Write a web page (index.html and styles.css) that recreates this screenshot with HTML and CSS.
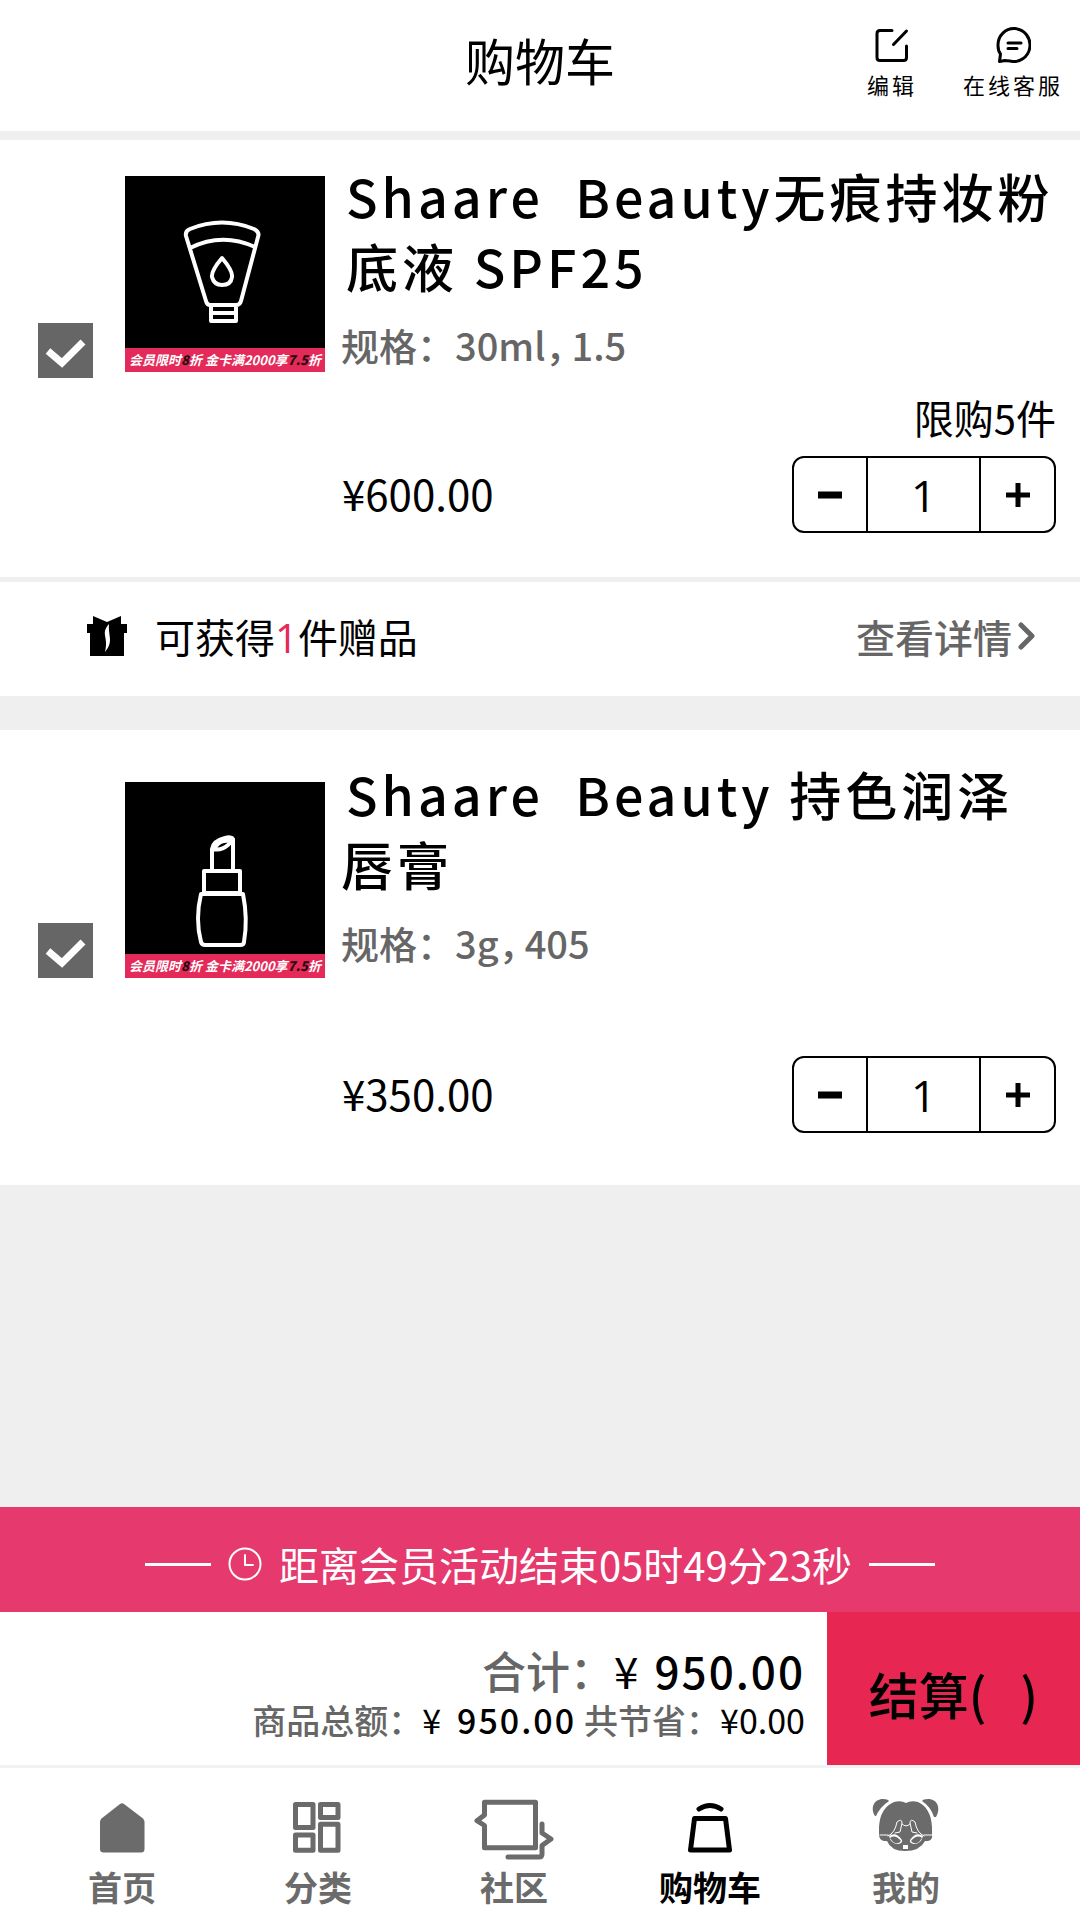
FILE: index.html
```html
<!DOCTYPE html>
<html lang="zh-CN">
<head>
<meta charset="utf-8">
<meta name="viewport" content="width=device-width, initial-scale=1">
<title>购物车</title>
<link rel="stylesheet" href="styles.css">
</head>
<body>
<header class="header">
  <h1 class="header-title">购物车</h1>
  <div class="header-actions">
    <button class="action" type="button">
      <svg class="action-icon" viewBox="0 0 36 36" aria-hidden="true"><path d="M18 3.500H6Q3 3.500 3 6.500V30.500Q3 33.500 6 33.500H29.500Q32.500 33.500 32.500 30.500V19M32.500 4L19.500 17.500"/></svg>
      <span>编辑</span>
    </button>
    <button class="action" type="button">
      <svg class="action-icon" viewBox="0 0 36 36" aria-hidden="true"><path d="M4.500 34.500L5.500 27C3 24 3 21 3 18.500A16 16.500 0 1 1 15 34Q11 33.500 10 33.500ZM13 16H26M13 21.500H22"/></svg>
      <span>在线客服</span>
    </button>
  </div>
</header>

<main class="cart">
  <article class="item">
    <label class="check" aria-label="选择粉底液">
      <input class="check-input" type="checkbox" checked>
      <svg class="check-mark" viewBox="0 0 55 55" aria-hidden="true"><path d="M10 28L24 40L45 19"/></svg>
    </label>
    <div class="photo">
      <svg class="photo-art" viewBox="0 0 200 172" aria-hidden="true">
        <path d="M61 60Q60 55 65 53Q97 40 129 53Q135 56 133 61L116 125Q115 129 111 129H85Q82 129 81 125ZM65 72Q97 56 130 71M86 129V145H111V129M86 137H111M97 82Q86 95 87 101Q89 109 97 109Q106 109 107 101Q108 95 97 82Z"/>
      </svg>
      <p class="promo">会员限时<b>8</b>折 金卡满2000享<b>7.5</b>折</p>
    </div>
    <div class="info">
      <h2 class="name">Shaare&nbsp; Beauty无痕持妆粉底液 SPF25</h2>
      <p class="spec">规格：30ml<span class="half">，</span>1.5</p>
    </div>
    <div class="purchase">
      <p class="limit">限购5件</p>
      <p class="price">¥600.00</p>
      <div class="stepper">
        <button class="step" type="button" aria-label="减少"><svg class="step-icon" viewBox="0 0 24 24" aria-hidden="true"><path class="minus" d="M0 12H24"/></svg></button>
        <input class="qty" type="text" inputmode="numeric" value="1" aria-label="数量">
        <button class="step" type="button" aria-label="增加"><svg class="step-icon" viewBox="0 0 24 24" aria-hidden="true"><path d="M0 12H24M12 0V24"/></svg></button>
      </div>
    </div>
  </article>

  <section class="gift">
    <svg class="gift-icon" viewBox="0 0 40 40" aria-hidden="true"><path d="M6 0L20 6L34 0V8H40V17H37V40H3V17H0V8H6Z"/><path class="ribbon" d="M22 8C13 18 22 20 18 36C27 25 21 21 22 8Z"/></svg>
    <p class="gift-text">可获得<span class="gift-count">1</span>件赠品</p>
    <a class="gift-link" href="#gift">查看详情<svg class="chevron" viewBox="0 0 18 28" aria-hidden="true"><path d="M3 3L14 14L3 25"/></svg></a>
  </section>

  <article class="item item-low">
    <label class="check" aria-label="选择唇膏">
      <input class="check-input" type="checkbox" checked>
      <svg class="check-mark" viewBox="0 0 55 55" aria-hidden="true"><path d="M10 28L24 40L45 19"/></svg>
    </label>
    <div class="photo">
      <svg class="photo-art" viewBox="0 0 200 172" aria-hidden="true">
        <path d="M87 89V67Q88 59 100 56Q106 54 108 57V89M88 67Q96 69 103 63Q108 59 107 56M91 64Q96 58 104 59M79 89H115V111H79ZM76 112H118Q123 137 119 160Q119 163 115 163H80Q77 163 76 160Q70 137 76 112Z"/>
      </svg>
      <p class="promo">会员限时<b>8</b>折 金卡满2000享<b>7.5</b>折</p>
    </div>
    <div class="info">
      <h2 class="name">Shaare&nbsp; Beauty 持色润泽唇膏</h2>
      <p class="spec">规格：3g<span class="half">，</span>405</p>
    </div>
    <div class="purchase">
      <p class="price">¥350.00</p>
      <div class="stepper">
        <button class="step" type="button" aria-label="减少"><svg class="step-icon" viewBox="0 0 24 24" aria-hidden="true"><path class="minus" d="M0 12H24"/></svg></button>
        <input class="qty" type="text" inputmode="numeric" value="1" aria-label="数量">
        <button class="step" type="button" aria-label="增加"><svg class="step-icon" viewBox="0 0 24 24" aria-hidden="true"><path d="M0 12H24M12 0V24"/></svg></button>
      </div>
    </div>
  </article>
</main>

<footer class="footer">
  <div class="countdown">
    <span class="rule"></span>
    <svg class="clock" viewBox="0 0 34 34" aria-hidden="true"><circle cx="17" cy="17" r="15.500"/><path d="M17 8V18H25"/></svg>
    <p>距离会员活动结束05时49分23秒</p>
    <span class="rule"></span>
  </div>
  <div class="summary">
    <div class="totals">
      <p class="total"><span class="muted">合计：</span><span>¥</span><span class="amount">950.00</span></p>
      <p class="subtotal"><span class="muted">商品总额：</span><span>¥</span><span class="amount">950.00</span><span class="muted saved">共节省：</span><span>¥0.00</span></p>
    </div>
    <button class="checkout" type="button">结算(&nbsp;&nbsp; )</button>
  </div>
  <nav class="nav">
    <a class="tab" href="#home">
      <svg class="tab-icon" viewBox="0 0 84 64" aria-hidden="true"><path class="solid" d="M40 8Q42 6.500 44 8L63 22.500Q64.500 24 64.500 26V53Q64.500 56.500 61 56.500H23.500Q20 56.500 20 53V26Q20 24 21.500 22.500Z"/></svg>
      <span>首页</span>
    </a>
    <a class="tab" href="#category">
      <svg class="tab-icon" viewBox="0 0 84 64" aria-hidden="true"><path d="M19.500 8.500H37V31.500H19.500ZM44.500 8.500H62V21.500H44.500ZM19.500 39H37V54.300H19.500ZM44.500 28.300H62V54.300H44.500Z"/></svg>
      <span>分类</span>
    </a>
    <a class="tab" href="#community">
      <svg class="tab-icon" viewBox="0 0 84 64" aria-hidden="true"><path d="M12.500 6.300H63.500V51.700H12.500V29.500L5 24.700L12.500 19ZM70 28V37L79 43L70 49.500V58Q70 61 67 61H36"/></svg>
      <span>社区</span>
    </a>
    <a class="tab tab-active" href="#cart" aria-current="page">
      <svg class="tab-icon" viewBox="0 0 84 64" aria-hidden="true"><path d="M31 13Q42 6 53 13M26.500 22.500H57.500L61.500 54H22.500Z"/></svg>
      <span>购物车</span>
    </a>
    <a class="tab" href="#me">
      <svg class="tab-icon" viewBox="0 0 84 64" aria-hidden="true">
        <path class="solid" d="M11 20C6 12 10 3 19 3Q24 3 25 5Q16 11 12 20ZM72 21C77 13 74 3 64 3Q59 3 58 5Q67 11 70 21ZM42 7Q47 4 54 6Q67 12 68 31V38Q69 44 64 45H61Q56 55 41 55Q27 55 23 45H20Q15 44 15 38V31Q16 12 30 6Q37 4 42 7Z"/>
        <path class="detail" d="M24 40Q31 37 33 26Q38 22 38 27L36 36L31 37M60 40Q53 37 51 26Q46 22 46 27L48 36L53 37M38 28Q42 32 46 28M16 39H24M60 39H68"/>
        <path class="face" d="M25 40Q32 35 38 44Q39 47 34 48Q27 48 25 40ZM59 40Q52 35 46 44Q45 47 50 48Q57 48 59 40ZM39 49H44V53H39Z"/>
        <path class="solid" d="M26 42Q31 38 37 45Q34 49 29 46ZM58 42Q53 38 47 45Q50 49 55 46Z"/>
      </svg>
      <span>我的</span>
    </a>
  </nav>
</footer>
</body>
</html>
```
FILE: styles.css
```css
* {
  box-sizing: border-box;
}

body {
  display: flex;
  flex-direction: column;
  min-height: 100vh;
  margin: 0;
  background: #efefef;
  color: #000;
  font-family: "Noto Sans CJK SC", sans-serif;
  font-size: 38px;
  line-height: 56px;
}

h1, h2, p {
  margin: 0;
  font-weight: 400;
}

button, input {
  margin: 0;
  padding: 0;
  border: 0;
  background: none;
  color: inherit;
  font: inherit;
}

a {
  color: inherit;
  text-decoration: none;
}

svg {
  display: block;
  fill: none;
  stroke: currentColor;
  stroke-linecap: round;
  stroke-linejoin: round;
}

/* Header */
.header {
  display: grid;
  grid-template-columns: 1fr auto 1fr;
  align-items: start;
  padding: 27px 17px 32px;
  margin-bottom: 9px;
  background: #fff;
}

.header-title {
  grid-column: 2;
  font-size: 50px;
  line-height: 64px;
}

.header-actions {
  display: flex;
  justify-content: flex-end;
  gap: 46px;
}

.action {
  display: flex;
  flex-direction: column;
  align-items: center;
  gap: 6px;
  font-size: 22px;
  line-height: 30px;
  letter-spacing: 3px;
}

.action-icon {
  width: 36px;
  height: 36px;
  stroke-width: 3;
}

/* Cart items */
.cart {
  flex: 1;
}

.item {
  display: grid;
  grid-template-columns: 55px 200px 1fr;
  grid-template-rows: minmax(217px, auto) auto;
  padding: 21px 24px 44px 38px;
  background: #fff;
}

.item-low {
  padding-top: 29px;
  padding-bottom: 52px;
}

.check {
  display: grid;
  align-self: end;
}

.check-input {
  grid-area: 1 / 1;
  appearance: none;
  width: 55px;
  height: 55px;
  background: #666;
}

.check-mark {
  grid-area: 1 / 1;
  width: 55px;
  height: 55px;
  color: #fff;
  stroke-width: 7;
  stroke-linecap: butt;
  stroke-linejoin: miter;
  pointer-events: none;
}

.check-input:not(:checked) + .check-mark {
  visibility: hidden;
}

.photo {
  align-self: start;
  width: 200px;
  margin: 15px 0 0 32px;
  background: #000;
}

.item-low .photo {
  margin-top: 23px;
}

.photo-art {
  width: 200px;
  height: 172px;
  color: #fff;
  stroke-width: 4;
}

.promo {
  background: #e32a58;
  color: #fff;
  font-size: 13px;
  font-style: italic;
  font-weight: 700;
  line-height: 24px;
  text-align: center;
  white-space: nowrap;
}

.promo b {
  color: #2a0a12;
}

.info {
  padding-left: 48px;
}

.name {
  padding-left: 5px;
  font-size: 52px;
  font-weight: 500;
  line-height: 70px;
  letter-spacing: 4px;
}

.item-low .name {
  padding-left: 0;
  text-indent: 5px;
}

.spec {
  padding-top: 16px;
  color: #666;
  font-weight: 500;
}

.half {
  margin-right: 7px;
  font-feature-settings: "halt";
}

.purchase {
  grid-column: 3;
  display: grid;
  grid-template-columns: 1fr auto;
  grid-template-rows: 78px auto;
  align-items: center;
  padding-left: 49px;
}

.limit {
  grid-area: 1 / 2;
  justify-self: end;
  font-size: 40px;
}

.price {
  grid-area: 2 / 1;
  padding-bottom: 4px;
  font-size: 42px;
}

.stepper {
  grid-area: 2 / 2;
  display: grid;
  grid-template-columns: 72px 115px 73px;
  height: 77px;
  border: 2px solid #000;
  border-radius: 12px;
}

.step {
  display: grid;
  place-items: center;
}

.step-icon {
  width: 24px;
  height: 24px;
  stroke-width: 5;
  stroke-linecap: butt;
}

.minus {
  stroke-width: 7;
}

.qty {
  width: 100%;
  border: solid #000;
  border-width: 0 2px;
  font-family: "Open Sans", sans-serif;
  font-size: 44px;
  text-align: center;
}

/* Gift row */
.gift {
  display: flex;
  align-items: center;
  margin: 5px 0 34px;
  padding: 24px 44px 30px 87px;
  background: #fff;
  font-size: 40px;
  line-height: 60px;
}

.gift-icon {
  width: 40px;
  height: 40px;
  fill: #000;
  stroke: none;
}

.ribbon {
  fill: #fff;
}

.gift-text {
  margin-left: 28px;
}

.gift-count {
  color: #e32a58;
  font-family: "Open Sans", sans-serif;
  line-height: 40px;
}

.gift-link {
  display: flex;
  align-items: center;
  gap: 6px;
  margin-left: auto;
  color: #666;
  font-size: 39px;
  font-weight: 500;
}

.chevron {
  width: 18px;
  height: 28px;
  stroke-width: 5;
}

/* Countdown */
.countdown {
  display: flex;
  align-items: center;
  justify-content: center;
  gap: 17px;
  padding: 27px 0 18px;
  background: #e63a6e;
  color: #fff;
  font-size: 40px;
  line-height: 60px;
}

.rule {
  width: 66px;
  height: 3px;
  background: #fff;
}

.clock {
  width: 34px;
  height: 34px;
  stroke-width: 2;
}

/* Summary */
.summary {
  display: grid;
  grid-template-columns: 1fr 253px;
  border-bottom: 3px solid #f2f2f2;
  background: #fff;
}

.totals {
  padding: 30px 22px 23px 0;
}

.total, .subtotal {
  display: flex;
  justify-content: flex-end;
}

.total {
  font-size: 44px;
}

.subtotal {
  font-size: 34px;
  line-height: 44px;
}

.amount {
  margin-left: 16px;
  font-weight: 500;
  letter-spacing: 2px;
}

.muted {
  color: #666;
  font-weight: 500;
}

.saved {
  margin-left: 8px;
}

.checkout {
  padding-top: 8px;
  background: #e72652;
  font-size: 50px;
  font-weight: 500;
}

/* Bottom navigation */
.nav {
  display: grid;
  grid-template-columns: repeat(5, 1fr);
  padding: 28px 76px 11px 24px;
  background: #fff;
}

.tab {
  display: flex;
  flex-direction: column;
  align-items: center;
  gap: 5px;
  color: #6b6b6b;
  font-size: 34px;
  font-weight: 700;
  line-height: 44px;
}

.tab-active {
  color: #000;
}

.tab-icon {
  width: 84px;
  height: 64px;
  stroke-width: 5;
}

.solid {
  fill: currentColor;
  stroke: none;
}

.face {
  fill: #fff;
  stroke: none;
}

.detail {
  stroke: #fff;
  stroke-width: 1;
}
```
